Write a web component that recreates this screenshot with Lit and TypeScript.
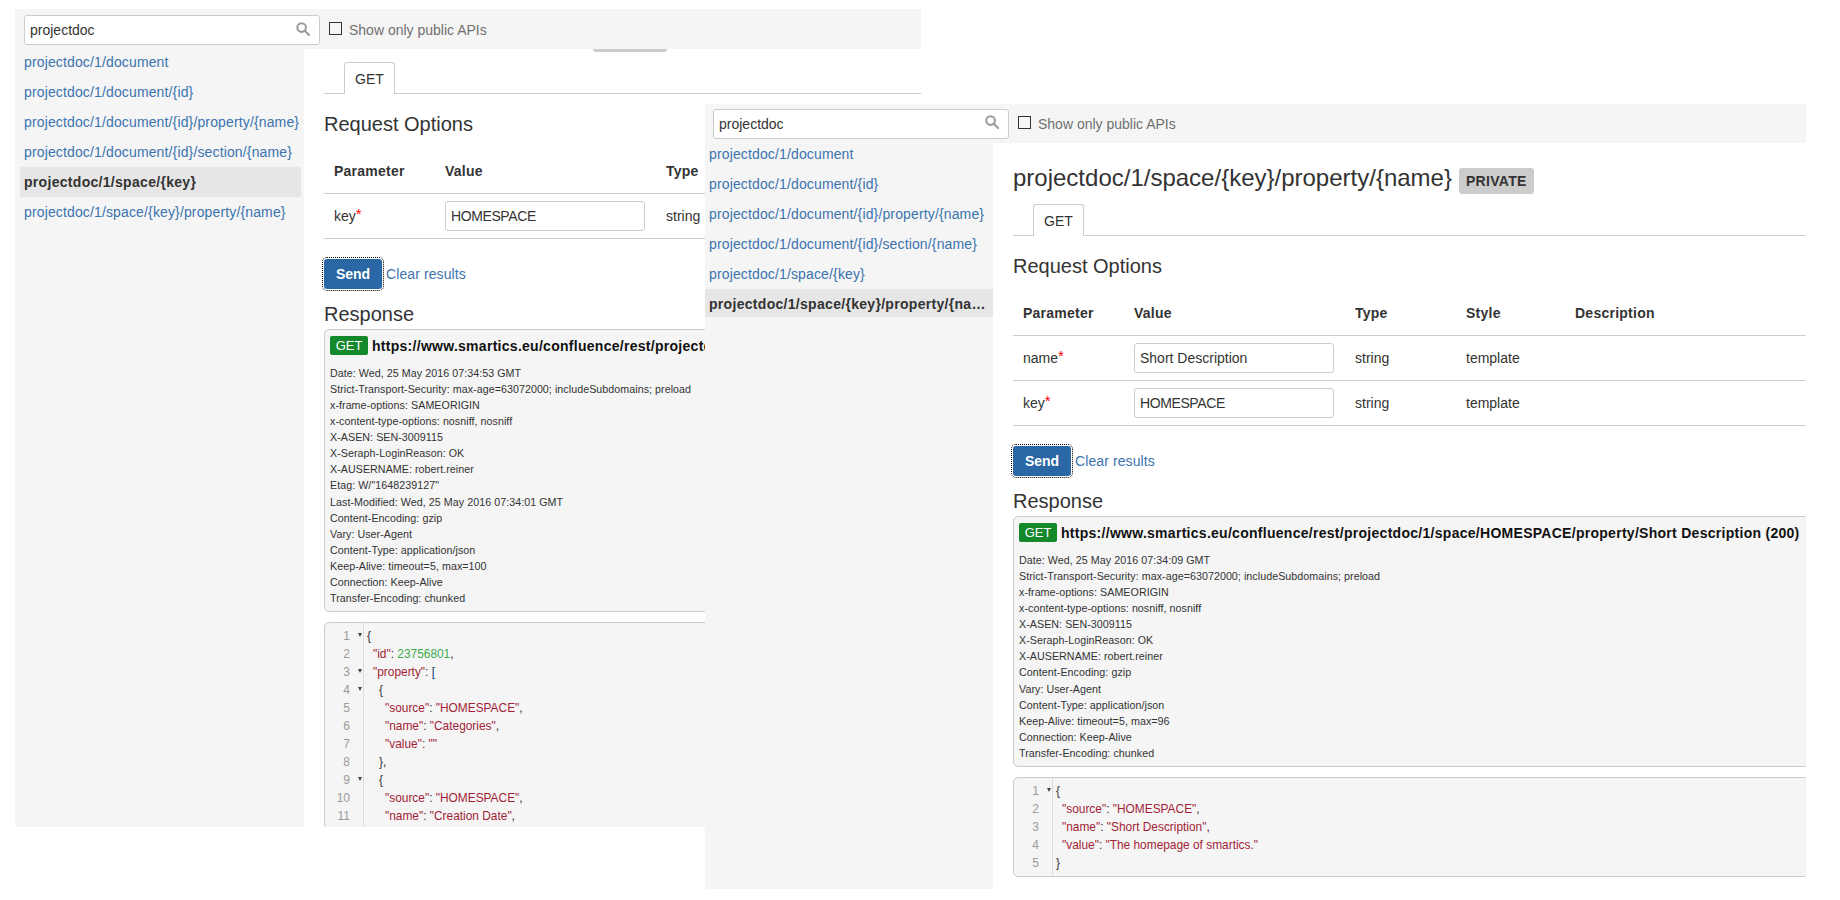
import { LitElement, html, css } from "lit";
import { customElement, property } from "lit/decorators.js";

type Tok = [string, string];
interface CodeLine { indent: number; fold?: boolean; toks: Tok[]; }
interface Param { name: string; value: string; }

const p = (t: string): Tok => ["pun", t];
const s = (t: string): Tok => ["str", t];
const kv = (k: string, v: string, tail = ","): Tok[] => [s(`"${k}"`), p(": "), s(`"${v}"`), p(tail)];

const ENDPOINTS = [
  "projectdoc/1/document",
  "projectdoc/1/document/{id}",
  "projectdoc/1/document/{id}/property/{name}",
  "projectdoc/1/document/{id}/section/{name}",
  "projectdoc/1/space/{key}",
  "projectdoc/1/space/{key}/property/{name}",
];

const BASE = "https://www.smartics.eu/confluence/rest/projectdoc/1/space/HOMESPACE";

const LEFT_HEADERS = [
  "Date: Wed, 25 May 2016 07:34:53 GMT",
  "Strict-Transport-Security: max-age=63072000; includeSubdomains; preload",
  "x-frame-options: SAMEORIGIN",
  "x-content-type-options: nosniff, nosniff",
  "X-ASEN: SEN-3009115",
  "X-Seraph-LoginReason: OK",
  "X-AUSERNAME: robert.reiner",
  'Etag: W/"1648239127"',
  "Last-Modified: Wed, 25 May 2016 07:34:01 GMT",
  "Content-Encoding: gzip",
  "Vary: User-Agent",
  "Content-Type: application/json",
  "Keep-Alive: timeout=5, max=100",
  "Connection: Keep-Alive",
  "Transfer-Encoding: chunked",
];

const RIGHT_HEADERS = [
  "Date: Wed, 25 May 2016 07:34:09 GMT",
  "Strict-Transport-Security: max-age=63072000; includeSubdomains; preload",
  "x-frame-options: SAMEORIGIN",
  "x-content-type-options: nosniff, nosniff",
  "X-ASEN: SEN-3009115",
  "X-Seraph-LoginReason: OK",
  "X-AUSERNAME: robert.reiner",
  "Content-Encoding: gzip",
  "Vary: User-Agent",
  "Content-Type: application/json",
  "Keep-Alive: timeout=5, max=96",
  "Connection: Keep-Alive",
  "Transfer-Encoding: chunked",
];

const LEFT_CODE: CodeLine[] = [
  { indent: 0, fold: true, toks: [p("{")] },
  { indent: 1, toks: [s('"id"'), p(": "), ["num", "23756801"], p(",")] },
  { indent: 1, fold: true, toks: [s('"property"'), p(": "), ["brk", "["]] },
  { indent: 2, fold: true, toks: [p("{")] },
  { indent: 3, toks: kv("source", "HOMESPACE") },
  { indent: 3, toks: kv("name", "Categories") },
  { indent: 3, toks: kv("value", "", "") },
  { indent: 2, toks: [p("},")] },
  { indent: 2, fold: true, toks: [p("{")] },
  { indent: 3, toks: kv("source", "HOMESPACE") },
  { indent: 3, toks: kv("name", "Creation Date") },
];

const RIGHT_CODE: CodeLine[] = [
  { indent: 0, fold: true, toks: [p("{")] },
  { indent: 1, toks: kv("source", "HOMESPACE") },
  { indent: 1, toks: kv("name", "Short Description") },
  { indent: 1, toks: kv("value", "The homepage of smartics.", "") },
  { indent: 0, toks: [p("}")] },
];

@customElement("api-window")
class ApiWindow extends LitElement {
  @property() variant = "front";
  @property() title = "";
  @property() url = "";
  @property({ type: Number }) active = 0;
  @property({ attribute: false }) params: Param[] = [];
  @property({ attribute: false }) headers: string[] = [];
  @property({ attribute: false }) code: CodeLine[] = [];

  static styles = css`
    :host { display: block; height: 100%; font: 14px/20px "Liberation Sans", Arial, sans-serif; color: #333; }
    .win { height: 100%; display: flex; flex-direction: column; background: #fff; }
    .bar { flex: none; display: flex; align-items: center; box-sizing: border-box; background: #f5f5f5; padding-left: 8px; }
    .back .bar { height: 40px; padding: 2px 0 0 9px; }
    .front .bar { height: 39px; }
    .search { flex: none; width: 296px; height: 30px; box-sizing: border-box; border: 1px solid #ccc; border-radius: 3px; background: #fff; display: flex; align-items: center; justify-content: space-between; padding: 0 9px 0 5px; }
    .search svg { display: block; margin-top: -3px; }
    .check { flex: none; width: 13px; height: 13px; box-sizing: border-box; border: 1px solid #333; margin: -3px 7px 0 9px; }
    .public { color: #707070; }
    .body { flex: 1; min-height: 0; display: flex; }
    .side { flex: none; background: #f5f5f5; }
    .back .side { width: 289px; }
    .front .side { width: 288px; }
    .list { list-style: none; margin: 0; padding: 0; }
    .back .list { margin: -2px 3px 0 5px; }
    .front .list { margin-top: -4px; }
    .item { height: 30px; line-height: 30px; padding: 0 8px 0 4px; white-space: nowrap; overflow: hidden; text-overflow: ellipsis; color: #3b73af; letter-spacing: 0.14px; }
    .back .item { padding-right: 0; }
    .item.on { background: #e6e6e6; color: #333; font-weight: bold; letter-spacing: 0.3px; }
    .front .item.on { height: 28px; padding-right: 6px; }
    .main { flex: 1; min-width: 0; overflow: hidden; padding: 20px 0 0 20px; }
    .scrolled { margin-top: -48px; }
    .titlerow { display: flex; align-items: flex-start; height: 31px; margin-bottom: 10px; }
    h1 { font-size: 24px; line-height: 30px; font-weight: normal; margin: 0; white-space: nowrap; }
    .private { flex: none; margin: 5px 0 0 7px; height: 26px; line-height: 26px; padding: 0 7px; background: #ccc; border-radius: 3px; font-weight: bold; letter-spacing: 0.3px; }
    .tabs { border-bottom: 1px solid #ccc; padding-left: 20px; height: 31px; }
    .tab { display: inline-block; box-sizing: border-box; height: 32px; line-height: 33px; padding: 0 10px; border: 1px solid #ccc; border-bottom: 0; border-radius: 3px 3px 0 0; background: #fff; }
    h2 { font-size: 20px; line-height: 28px; font-weight: normal; margin: 0; }
    .opts { margin-top: 16px; }
    table { border-collapse: collapse; table-layout: fixed; width: 100%; margin-top: 11px; }
    th, td { padding: 0 0 0 10px; text-align: left; border-bottom: 1px solid #ccc; height: 44px; box-sizing: content-box; white-space: nowrap; }
    th { font-weight: bold; letter-spacing: 0.25px; }
    .cv { padding-left: 0; }
    .cp { width: 111px; }
    .cval { width: 221px; }
    .ct { width: 111px; padding-left: 0; }
    .cs { width: 109px; padding-left: 0; }
    .cd { padding-left: 0; }
    .req { color: #f00; font-size: 15px; position: relative; top: -2px; }
    .field { width: 200px; height: 30px; box-sizing: border-box; border: 1px solid #ccc; border-radius: 3px; line-height: 28px; padding-left: 5px; }
    .caps { letter-spacing: -0.4px; }
    .actions { display: flex; align-items: center; gap: 4px; margin: 20px 0 11px; }
    .send { flex: none; width: 58px; height: 30px; border: 0; padding: 0; border-radius: 3px; background: #2a67a4; color: #fff; font: bold 14px "Liberation Sans", Arial, sans-serif; outline: 1px dotted #000; outline-offset: 1px; }
    .link { color: #3b73af; letter-spacing: 0.1px; }
    .box { margin: 1px -3px 0 0; border: 1px solid #ccc; border-radius: 5px; background: #f5f5f5; }
    .res { padding: 6px 5px 5px; }
    .reshead { display: flex; align-items: center; gap: 4px; height: 19px; white-space: nowrap; }
    .get { flex: none; width: 38px; height: 19px; line-height: 20px; text-align: center; background: #14892c; color: #fff; border-radius: 2px; font-size: 13px; }
    .url { font-weight: bold; color: #111; letter-spacing: 0.28px; }
    .hdrs { margin-top: 10px; font-size: 10.7px; line-height: 16.07px; white-space: nowrap; letter-spacing: 0.05px; }
    .code { margin-top: 10px; display: flex; font-size: 11.9px; line-height: 18px; padding: 4px 0; white-space: pre; }
    .gutter { flex: none; width: 38px; border-right: 1px solid #ddd; margin: -4px 0; padding: 4px 0; color: #999; }
    .gl { display: flex; justify-content: flex-end; align-items: center; height: 18px; }
    .n { font-size: 12px; }
    .slot { flex: none; box-sizing: border-box; width: 13px; padding-right: 1px; display: flex; justify-content: flex-end; }
    .tri { width: 0; height: 0; border: 2.5px solid transparent; border-top: 4px solid #444; border-bottom: 0; margin-top: -1px; }
    .lines { padding-left: 3px; }
    .ln { height: 18px; }
    .i1 { padding-left: 6px; }
    .i2 { padding-left: 12px; }
    .i3 { padding-left: 18px; }
    .pun { color: #333; }
    .str { color: #a31d36; }
    .num { color: #3cab4b; }
    .brk { color: #0b3c6f; }
  `;

  render() {
    const back = this.variant === "back";
    return html`<div class="win ${this.variant}">
      <div class="bar">
        <div class="search" role="textbox"><span>projectdoc</span>
          <svg width="14" height="14" viewBox="0 0 14 14" fill="none" stroke="#999" stroke-width="2"><circle cx="5.6" cy="5.6" r="4.3"/><path d="M8.8 8.8 13 13" stroke-linecap="round"/></svg>
        </div>
        <span class="check" role="checkbox" aria-checked="false"></span>
        <span class="public">Show only public APIs</span>
      </div>
      <div class="body">
        <nav class="side"><ul class="list">
          ${ENDPOINTS.map((e, i) => html`<li class="item ${i === this.active ? "on" : ""}">${e}</li>`)}
        </ul></nav>
        <main class="main">
          <div class=${back ? "scrolled" : ""}>
            <div class="titlerow"><h1>${this.title}</h1><span class="private">PRIVATE</span></div>
            <div class="tabs"><span class="tab">GET</span></div>
            <h2 class="opts">Request Options</h2>
            <table>
              <thead><tr><th class="cp">Parameter</th><th class="cv cval">Value</th><th class="ct">Type</th><th class="cs">Style</th><th class="cd">Description</th></tr></thead>
              <tbody>${this.params.map((r) => html`<tr>
                <td>${r.name}<span class="req">*</span></td>
                <td class="cv"><div class="field ${r.value === r.value.toUpperCase() ? "caps" : ""}" role="textbox">${r.value}</div></td>
                <td class="ct">string</td><td class="cs">template</td><td class="cd"></td>
              </tr>`)}</tbody>
            </table>
            <div class="actions"><button class="send">Send</button><span class="link">Clear results</span></div>
            <h2>Response</h2>
            <section class="box res">
              <div class="reshead"><span class="get">GET</span><span class="url">${this.url}</span></div>
              <div class="hdrs">${this.headers.map((h) => html`<div>${h}</div>`)}</div>
            </section>
            <section class="box code">
              <div class="gutter">${this.code.map((l, i) => html`<div class="gl"><span class="n">${i + 1}</span><span class="slot">${l.fold ? html`<span class="tri"></span>` : ""}</span></div>`)}</div>
              <div class="lines">${this.code.map((l) => html`<div class="ln i${l.indent}">${l.toks.map(([c, t]) => html`<span class=${c}>${t}</span>`)}</div>`)}</div>
            </section>
          </div>
        </main>
      </div>
    </div>`;
  }
}

@customElement("app-root")
export class AppRoot extends LitElement {
  static styles = css`
    :host { display: block; position: relative; width: 1840px; height: 900px; overflow: hidden; background: #fff; }
    .w { position: absolute; }
    .w1 { left: 15px; top: 9px; width: 906px; height: 818px; }
    .w2 { left: 705px; top: 104px; width: 1101px; height: 785px; }
  `;
  render() {
    return html`
      <api-window class="w w1" variant="back" title="projectdoc/1/space/{key}" .active=${4}
        .url=${BASE + " (200)"}
        .params=${[{ name: "key", value: "HOMESPACE" }]}
        .headers=${LEFT_HEADERS} .code=${LEFT_CODE}></api-window>
      <api-window class="w w2" variant="front" title="projectdoc/1/space/{key}/property/{name}" .active=${5}
        .url=${BASE + "/property/Short Description (200)"}
        .params=${[{ name: "name", value: "Short Description" }, { name: "key", value: "HOMESPACE" }]}
        .headers=${RIGHT_HEADERS} .code=${RIGHT_CODE}></api-window>`;
  }
}
